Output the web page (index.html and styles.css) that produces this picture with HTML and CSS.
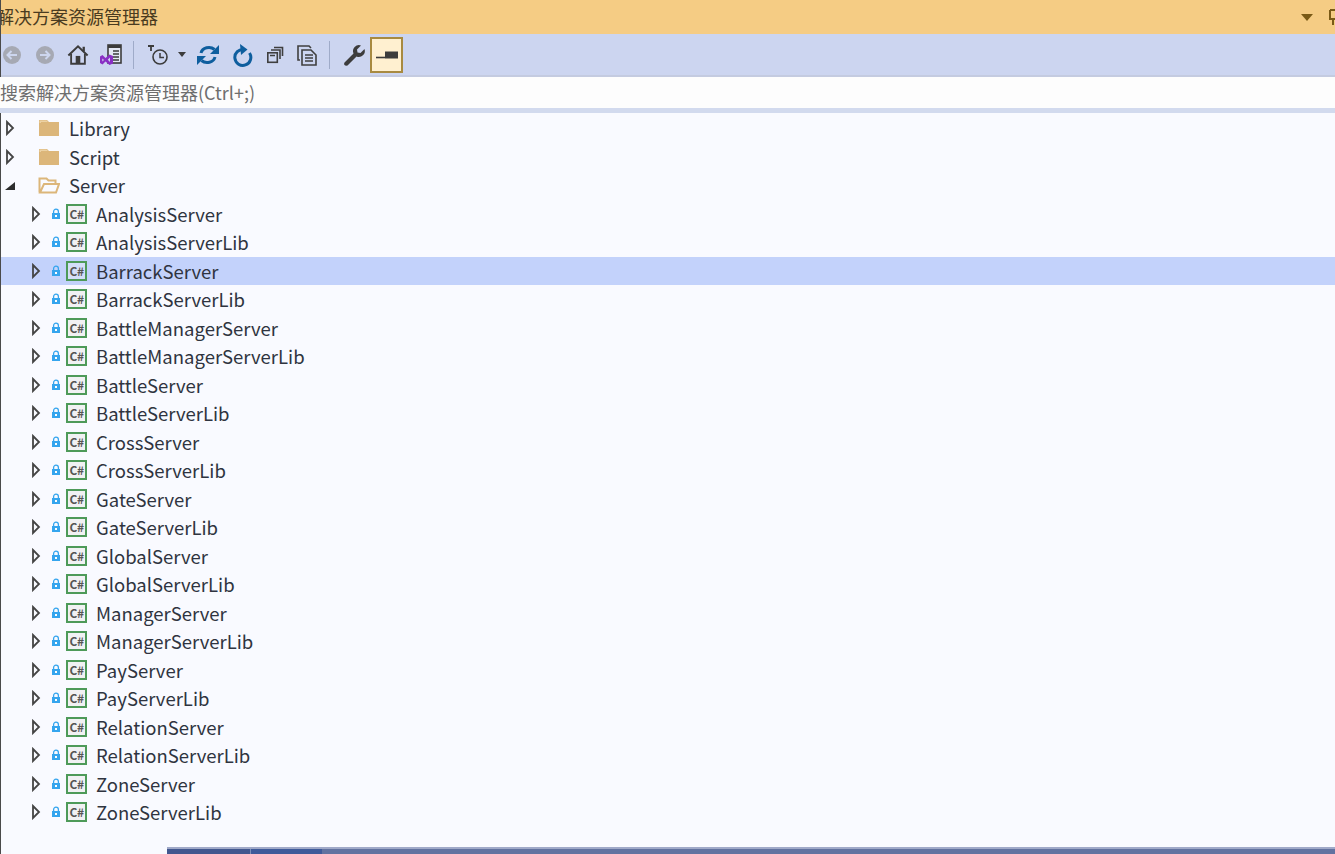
FILE: index.html
```html
<!DOCTYPE html>
<html lang="zh-CN">
<head>
<meta charset="utf-8">
<title>解决方案资源管理器</title>
<link rel="stylesheet" href="styles.css">
</head>
<body>
<svg class="defs" width="0" height="0" aria-hidden="true">
  <defs>
    <symbol id="closed" viewBox="0 0 10 16"><path d="M2 2 L8 8 L2 14 Z" fill="none" stroke="#444" stroke-width="1.800" stroke-linejoin="miter"/></symbol>
    <symbol id="lock" viewBox="0 0 10 12"><path d="M2.600 5.500 V3.600 a2.400 2.400 0 0 1 4.800 0 V5.500" fill="none" stroke="#35a5ee" stroke-width="1.300"/><rect x="1" y="5" width="8" height="6" fill="#35a5ee"/><rect x="4" y="7" width="2" height="2" fill="#fff"/></symbol>
    <symbol id="folder" viewBox="0 0 22 18"><path d="M1 1 H9 L11 3 H21 V17 H1 Z" fill="#dcb67a"/><path d="M1.500 1.500 H8.500 L10 3 H3 V4 H1.500 Z" fill="#ecd2a4"/></symbol>
  </defs>
</svg>
<div class="panel">
  <header class="titlebar">
    <span class="title">解决方案资源管理器</span>
    <span class="title-actions">
      <svg class="caret" width="12" height="7" viewBox="0 0 12 7"><path d="M0 0 H12 L6 7 Z" fill="#7a5a16"/></svg>
      <svg class="pin" width="8" height="18" viewBox="0 0 8 18"><path d="M2 2 H8 M2 2 V11 H8 M5 11 V17" fill="none" stroke="#7a5a16" stroke-width="2"/></svg>
    </span>
  </header>

  <div class="toolbar">
    <svg class="tb tb-back" width="20" height="20" viewBox="0 0 20 20"><circle cx="10" cy="10" r="9" fill="#a6a9b3"/><path d="M15 10 H6 M9.500 6 L5.500 10 L9.500 14" fill="none" stroke="#cdd6ee" stroke-width="2"/></svg>
    <svg class="tb tb-forward" width="20" height="20" viewBox="0 0 20 20"><circle cx="10" cy="10" r="9" fill="#a6a9b3"/><path d="M5 10 H14 M10.500 6 L14.500 10 L10.500 14" fill="none" stroke="#cdd6ee" stroke-width="2"/></svg>
    <svg class="tb tb-home" width="22" height="22" viewBox="0 0 24 24"><path d="M1.500 12.500 L12 2.500 L22.500 12.500" fill="none" stroke="#3c3c3c" stroke-width="2.200"/><path d="M4.500 11 V21.500 H19.500 V11" fill="none" stroke="#3c3c3c" stroke-width="2"/><rect x="9.500" y="13" width="5" height="8.500" fill="#3c3c3c"/><rect x="17" y="3" width="2.500" height="5" fill="#3c3c3c"/></svg>
    <svg class="tb tb-vs" width="24" height="24" viewBox="0 0 24 24"><rect x="9" y="2" width="13" height="18" fill="#e4e8f4" stroke="#3c3c3c" stroke-width="1.600"/><path d="M9 3.500 H22" stroke="#3c3c3c" stroke-width="3"/><path d="M14 8 H20 M14 11 H20 M14 14 H20 M14 17 H20" stroke="#3c3c3c" stroke-width="1.300"/><path d="M1 13.500 L3.500 12 L6.500 15 L10.500 11.500 L14 13 V20.500 L10.500 22 L6.500 18.500 L3.500 21.500 L1 20 Z" fill="#8a2fc4"/><path d="M11 14.500 L8.800 16.800 L11 19 Z" fill="#cdd6ee"/><path d="M3.300 15.500 V18.500 L5 17 Z" fill="#cdd6ee"/></svg>
    <span class="sep sep-first"></span>
    <svg class="tb tb-clock" width="24" height="24" viewBox="0 0 24 24"><path d="M1 3 H7 M4 3 V8" stroke="#3c3c3c" stroke-width="1.800" fill="none"/><circle cx="13" cy="14" r="7" fill="none" stroke="#3c3c3c" stroke-width="1.600"/><path d="M13 10 V14.500 H17" stroke="#3c3c3c" stroke-width="1.500" fill="none"/></svg>
    <svg class="tb-caret" width="8" height="5" viewBox="0 0 8 5"><path d="M0 0 H8 L4 5 Z" fill="#3c3c3c"/></svg>
    <svg class="tb tb-sync" width="24" height="24" viewBox="0 0 24 24"><path d="M5 10 A8 7 0 0 1 18.500 6.500" fill="none" stroke="#0e5e9e" stroke-width="3"/><path d="M23 2 V11 H14 Z" fill="#0e5e9e"/><path d="M19 14 A8 7 0 0 1 5.500 17.500" fill="none" stroke="#0e5e9e" stroke-width="3"/><path d="M1 22 V13 H10 Z" fill="#0e5e9e"/></svg>
    <svg class="tb tb-reload" width="22" height="24" viewBox="0 0 22 24"><path d="M13 6.500 A8 8 0 1 0 18.500 10" fill="none" stroke="#0e5e9e" stroke-width="3"/><path d="M9 1 L16.500 6.500 L10 12 Z" fill="#0e5e9e"/></svg>
    <svg class="tb tb-collapse" width="18" height="18" viewBox="0 0 18 18"><rect x="1.800" y="6.800" width="9.500" height="9.500" fill="none" stroke="#3f3f3f" stroke-width="1.600"/><path d="M5 4 H14 V13 M8 1.500 H16.500 V10" fill="none" stroke="#3f3f3f" stroke-width="1.600"/><path d="M4 9.500 H9" stroke="#3f3f3f" stroke-width="1.500"/></svg>
    <svg class="tb tb-copy" width="22" height="22" viewBox="0 0 22 22"><path d="M4 16 H2 V2 H13 L15 4" fill="none" stroke="#3f3f3f" stroke-width="1.600"/><path d="M6 6 H15 L20 11 V21 H6 Z" fill="none" stroke="#3f3f3f" stroke-width="1.600"/><path d="M9 11 H17 M9 14 H17 M9 17 H17" stroke="#3f3f3f" stroke-width="1.500"/></svg>
    <span class="sep sep-second"></span>
    <svg class="tb tb-wrench" width="24" height="24" viewBox="0 0 24 24"><path d="M2.500 19.500 L11.500 10.500 A6 6 0 0 1 19 2.500 L15 6.500 L15.500 9.500 L18.500 10 L22.500 6 A6 6 0 0 1 14.500 13.500 L5.500 22.500 Q3.500 23 2.500 22 Q1.500 21 2.500 19.500 Z" fill="#3c3c3c"/></svg>
    <span class="tb-active"><svg width="22" height="8" viewBox="0 0 22 8"><path d="M0 6.500 H9" stroke="#3c3c3c" stroke-width="1.600"/><rect x="9" y="0.500" width="13" height="7" fill="#3c3c3c"/></svg></span>
  </div>

  <div class="search">搜索解决方案资源管理器(Ctrl+;)</div>

  <ul class="tree">
    <li class="row folder"><svg class="arrow" width="10" height="16"><use href="#closed"/></svg><svg class="folder-ico" width="22" height="18"><use href="#folder"/></svg><span class="label">Library</span></li>
    <li class="row folder"><svg class="arrow" width="10" height="16"><use href="#closed"/></svg><svg class="folder-ico" width="22" height="18"><use href="#folder"/></svg><span class="label">Script</span></li>
    <li class="row folder"><svg class="arrow" width="10" height="16" viewBox="0 0 10 16"><path d="M0 13 L10 5 V13 Z" fill="#2d2d2d"/></svg><svg class="folder-ico" width="22" height="18" viewBox="0 0 22 18"><path d="M1.500 16.500 V2.500 H8.500 L10.500 4.500 H17.500 V8 H6 L2 16.500 H18 L21 8 H6" fill="#f9faff" stroke="#dcb67a" stroke-width="2"/></svg><span class="label">Server</span></li>
    <li class="row project"><svg class="arrow" width="10" height="16"><use href="#closed"/></svg><svg class="lock" width="10" height="12"><use href="#lock"/></svg><span class="cs">C#</span><span class="label">AnalysisServer</span></li>
    <li class="row project"><svg class="arrow" width="10" height="16"><use href="#closed"/></svg><svg class="lock" width="10" height="12"><use href="#lock"/></svg><span class="cs">C#</span><span class="label">AnalysisServerLib</span></li>
    <li class="row project selected"><svg class="arrow" width="10" height="16"><use href="#closed"/></svg><svg class="lock" width="10" height="12"><use href="#lock"/></svg><span class="cs">C#</span><span class="label">BarrackServer</span></li>
    <li class="row project"><svg class="arrow" width="10" height="16"><use href="#closed"/></svg><svg class="lock" width="10" height="12"><use href="#lock"/></svg><span class="cs">C#</span><span class="label">BarrackServerLib</span></li>
    <li class="row project"><svg class="arrow" width="10" height="16"><use href="#closed"/></svg><svg class="lock" width="10" height="12"><use href="#lock"/></svg><span class="cs">C#</span><span class="label">BattleManagerServer</span></li>
    <li class="row project"><svg class="arrow" width="10" height="16"><use href="#closed"/></svg><svg class="lock" width="10" height="12"><use href="#lock"/></svg><span class="cs">C#</span><span class="label">BattleManagerServerLib</span></li>
    <li class="row project"><svg class="arrow" width="10" height="16"><use href="#closed"/></svg><svg class="lock" width="10" height="12"><use href="#lock"/></svg><span class="cs">C#</span><span class="label">BattleServer</span></li>
    <li class="row project"><svg class="arrow" width="10" height="16"><use href="#closed"/></svg><svg class="lock" width="10" height="12"><use href="#lock"/></svg><span class="cs">C#</span><span class="label">BattleServerLib</span></li>
    <li class="row project"><svg class="arrow" width="10" height="16"><use href="#closed"/></svg><svg class="lock" width="10" height="12"><use href="#lock"/></svg><span class="cs">C#</span><span class="label">CrossServer</span></li>
    <li class="row project"><svg class="arrow" width="10" height="16"><use href="#closed"/></svg><svg class="lock" width="10" height="12"><use href="#lock"/></svg><span class="cs">C#</span><span class="label">CrossServerLib</span></li>
    <li class="row project"><svg class="arrow" width="10" height="16"><use href="#closed"/></svg><svg class="lock" width="10" height="12"><use href="#lock"/></svg><span class="cs">C#</span><span class="label">GateServer</span></li>
    <li class="row project"><svg class="arrow" width="10" height="16"><use href="#closed"/></svg><svg class="lock" width="10" height="12"><use href="#lock"/></svg><span class="cs">C#</span><span class="label">GateServerLib</span></li>
    <li class="row project"><svg class="arrow" width="10" height="16"><use href="#closed"/></svg><svg class="lock" width="10" height="12"><use href="#lock"/></svg><span class="cs">C#</span><span class="label">GlobalServer</span></li>
    <li class="row project"><svg class="arrow" width="10" height="16"><use href="#closed"/></svg><svg class="lock" width="10" height="12"><use href="#lock"/></svg><span class="cs">C#</span><span class="label">GlobalServerLib</span></li>
    <li class="row project"><svg class="arrow" width="10" height="16"><use href="#closed"/></svg><svg class="lock" width="10" height="12"><use href="#lock"/></svg><span class="cs">C#</span><span class="label">ManagerServer</span></li>
    <li class="row project"><svg class="arrow" width="10" height="16"><use href="#closed"/></svg><svg class="lock" width="10" height="12"><use href="#lock"/></svg><span class="cs">C#</span><span class="label">ManagerServerLib</span></li>
    <li class="row project"><svg class="arrow" width="10" height="16"><use href="#closed"/></svg><svg class="lock" width="10" height="12"><use href="#lock"/></svg><span class="cs">C#</span><span class="label">PayServer</span></li>
    <li class="row project"><svg class="arrow" width="10" height="16"><use href="#closed"/></svg><svg class="lock" width="10" height="12"><use href="#lock"/></svg><span class="cs">C#</span><span class="label">PayServerLib</span></li>
    <li class="row project"><svg class="arrow" width="10" height="16"><use href="#closed"/></svg><svg class="lock" width="10" height="12"><use href="#lock"/></svg><span class="cs">C#</span><span class="label">RelationServer</span></li>
    <li class="row project"><svg class="arrow" width="10" height="16"><use href="#closed"/></svg><svg class="lock" width="10" height="12"><use href="#lock"/></svg><span class="cs">C#</span><span class="label">RelationServerLib</span></li>
    <li class="row project"><svg class="arrow" width="10" height="16"><use href="#closed"/></svg><svg class="lock" width="10" height="12"><use href="#lock"/></svg><span class="cs">C#</span><span class="label">ZoneServer</span></li>
    <li class="row project"><svg class="arrow" width="10" height="16"><use href="#closed"/></svg><svg class="lock" width="10" height="12"><use href="#lock"/></svg><span class="cs">C#</span><span class="label">ZoneServerLib</span></li>
  </ul>

  <footer class="statusbar"><span class="status-tab"></span><span class="status-tab status-tab-2"></span></footer>
</div>
</body>
</html>
```

FILE: styles.css
```css
* { box-sizing: border-box; }

html, body {
  margin: 0;
  padding: 0;
  height: 854px;
  overflow: hidden;
}

body {
  background: #f9faff;
  font-family: "Noto Sans CJK SC", "Noto Sans", sans-serif;
  color: #2b2b2b;
}

.defs { display: block; height: 0; }

.panel {
  display: flex;
  flex-direction: column;
  height: 854px;
  border-left: 1px solid #4a4a4a;
}

.titlebar {
  display: flex;
  align-items: center;
  justify-content: space-between;
  height: 34px;
  flex: none;
  overflow: hidden;
  background: #f5cc84;
  font-size: 18px;
  color: #4a3b20;
}

.title { margin-left: -5px; margin-bottom: 2px; }

.title-actions {
  display: flex;
  align-items: center;
  gap: 15px;
}

.pin { margin-right: -1px; }

.toolbar {
  display: flex;
  align-items: center;
  height: 43px;
  flex: none;
  padding-left: 1px;
  background: #ccd5f0;
  border-bottom: 2px solid #c4cbe0;
}

.tb { flex: none; }
.tb-back { margin-right: 13px; }
.tb-forward { margin-right: 12px; }
.tb-home { margin-right: 10px; }
.tb-vs { margin-right: 10px; }
.tb-clock { margin-right: 7px; }
.tb-sync { margin-right: 11px; }
.tb-reload { margin-right: 13px; }
.tb-collapse { margin-right: 12px; }
.tb-copy { margin-right: 11px; }
.tb-wrench { margin-right: 4px; }

.tb-caret { flex: none; margin-right: 10px; }

.sep {
  width: 1px;
  height: 28px;
  flex: none;
  background: #9fabc9;
}

.sep-first { margin-right: 13px; }
.sep-second { margin-right: 12px; }

.tb-active {
  display: flex;
  align-items: center;
  justify-content: center;
  width: 33px;
  height: 36px;
  flex: none;
  background: #fff0d0;
  border: 2px solid #a88a40;
}

.search {
  height: 36px;
  flex: none;
  overflow: hidden;
  background: #fdfdfd;
  border-bottom: 5px solid #d2daee;
  font-size: 18px;
  line-height: 31px;
  margin-left: -1px;
  color: #6e6e6e;
  white-space: nowrap;
}

.tree {
  list-style: none;
  margin: 0;
  padding: 1px 0 0;
  flex: 1;
  overflow: hidden;
}

.row {
  display: flex;
  align-items: center;
  height: 28.5px;
  font-size: 18.5px;
  color: #2f3440;
  white-space: nowrap;
}

.folder { padding-left: 4px; }
.project { padding-left: 30px; }

.selected { background: #c3d2fb; }

.arrow { flex: none; }

.folder-ico { flex: none; margin-left: 23px; margin-right: 9px; }

.lock { flex: none; margin-left: 10px; margin-right: 5px; }

.cs {
  flex: none;
  width: 21px;
  height: 20px;
  margin-right: 9px;
  border: 2px solid #4e9a59;
  background: #f1f1f3;
  font-size: 12px;
  font-weight: 700;
  line-height: 15px;
  text-align: center;
  color: #555;
  letter-spacing: -0.5px;
}

.selected .cs { background: #d4def8; }

.statusbar {
  display: flex;
  flex: none;
  height: 7px;
  margin-left: 166px;
  background: #6272a0;
  border-top: 2px solid #a0a9c8;
}

.status-tab { width: 84px; background: #42578f; border-right: 1px solid #7d8fb8; }
.status-tab-2 { width: 71px; background: #3f5a9a; border-right: 0; }
```
